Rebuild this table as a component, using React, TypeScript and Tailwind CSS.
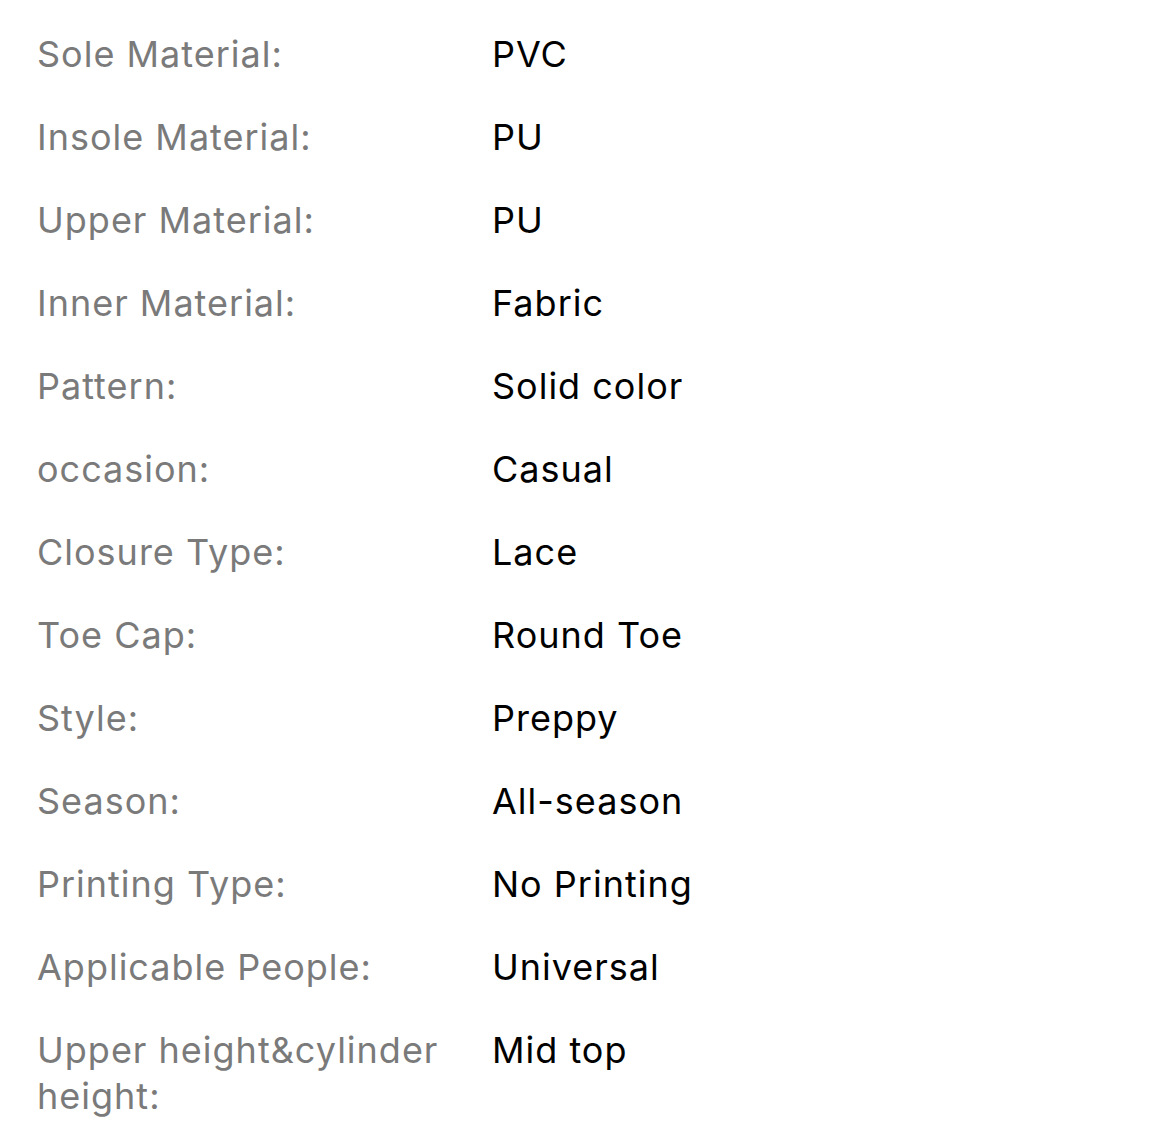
const specs: [string, string][] = [
    ["Sole Material:", "PVC"],
    ["Insole Material:", "PU"],
    ["Upper Material:", "PU"],
    ["Inner Material:", "Fabric"],
    ["Pattern:", "Solid color"],
    ["occasion:", "Casual"],
    ["Closure Type:", "Lace"],
    ["Toe Cap:", "Round Toe"],
    ["Style:", "Preppy"],
    ["Season:", "All-season"],
    ["Printing Type:", "No Printing"],
    ["Applicable People:", "Universal"],
    ["Upper height&cylinder height:", "Mid top"],
];

export default function App() {
    return (
        <div className="min-h-[1147px] w-[1170px] bg-white pl-[37px] pt-[31px] font-['Inter','Roboto',sans-serif] text-[36px] leading-[46px] tracking-[1px]">
            <div className="grid grid-cols-[455px_1fr] gap-y-[37px]">
                {specs.map(([label, value]) => (
                    <div key={label} className="contents">
                        <span className="pr-[8px] text-[#7a7a7a]">{label}</span>
                        <span className="text-black">{value}</span>
                    </div>
                ))}
            </div>
        </div>
    );
}
